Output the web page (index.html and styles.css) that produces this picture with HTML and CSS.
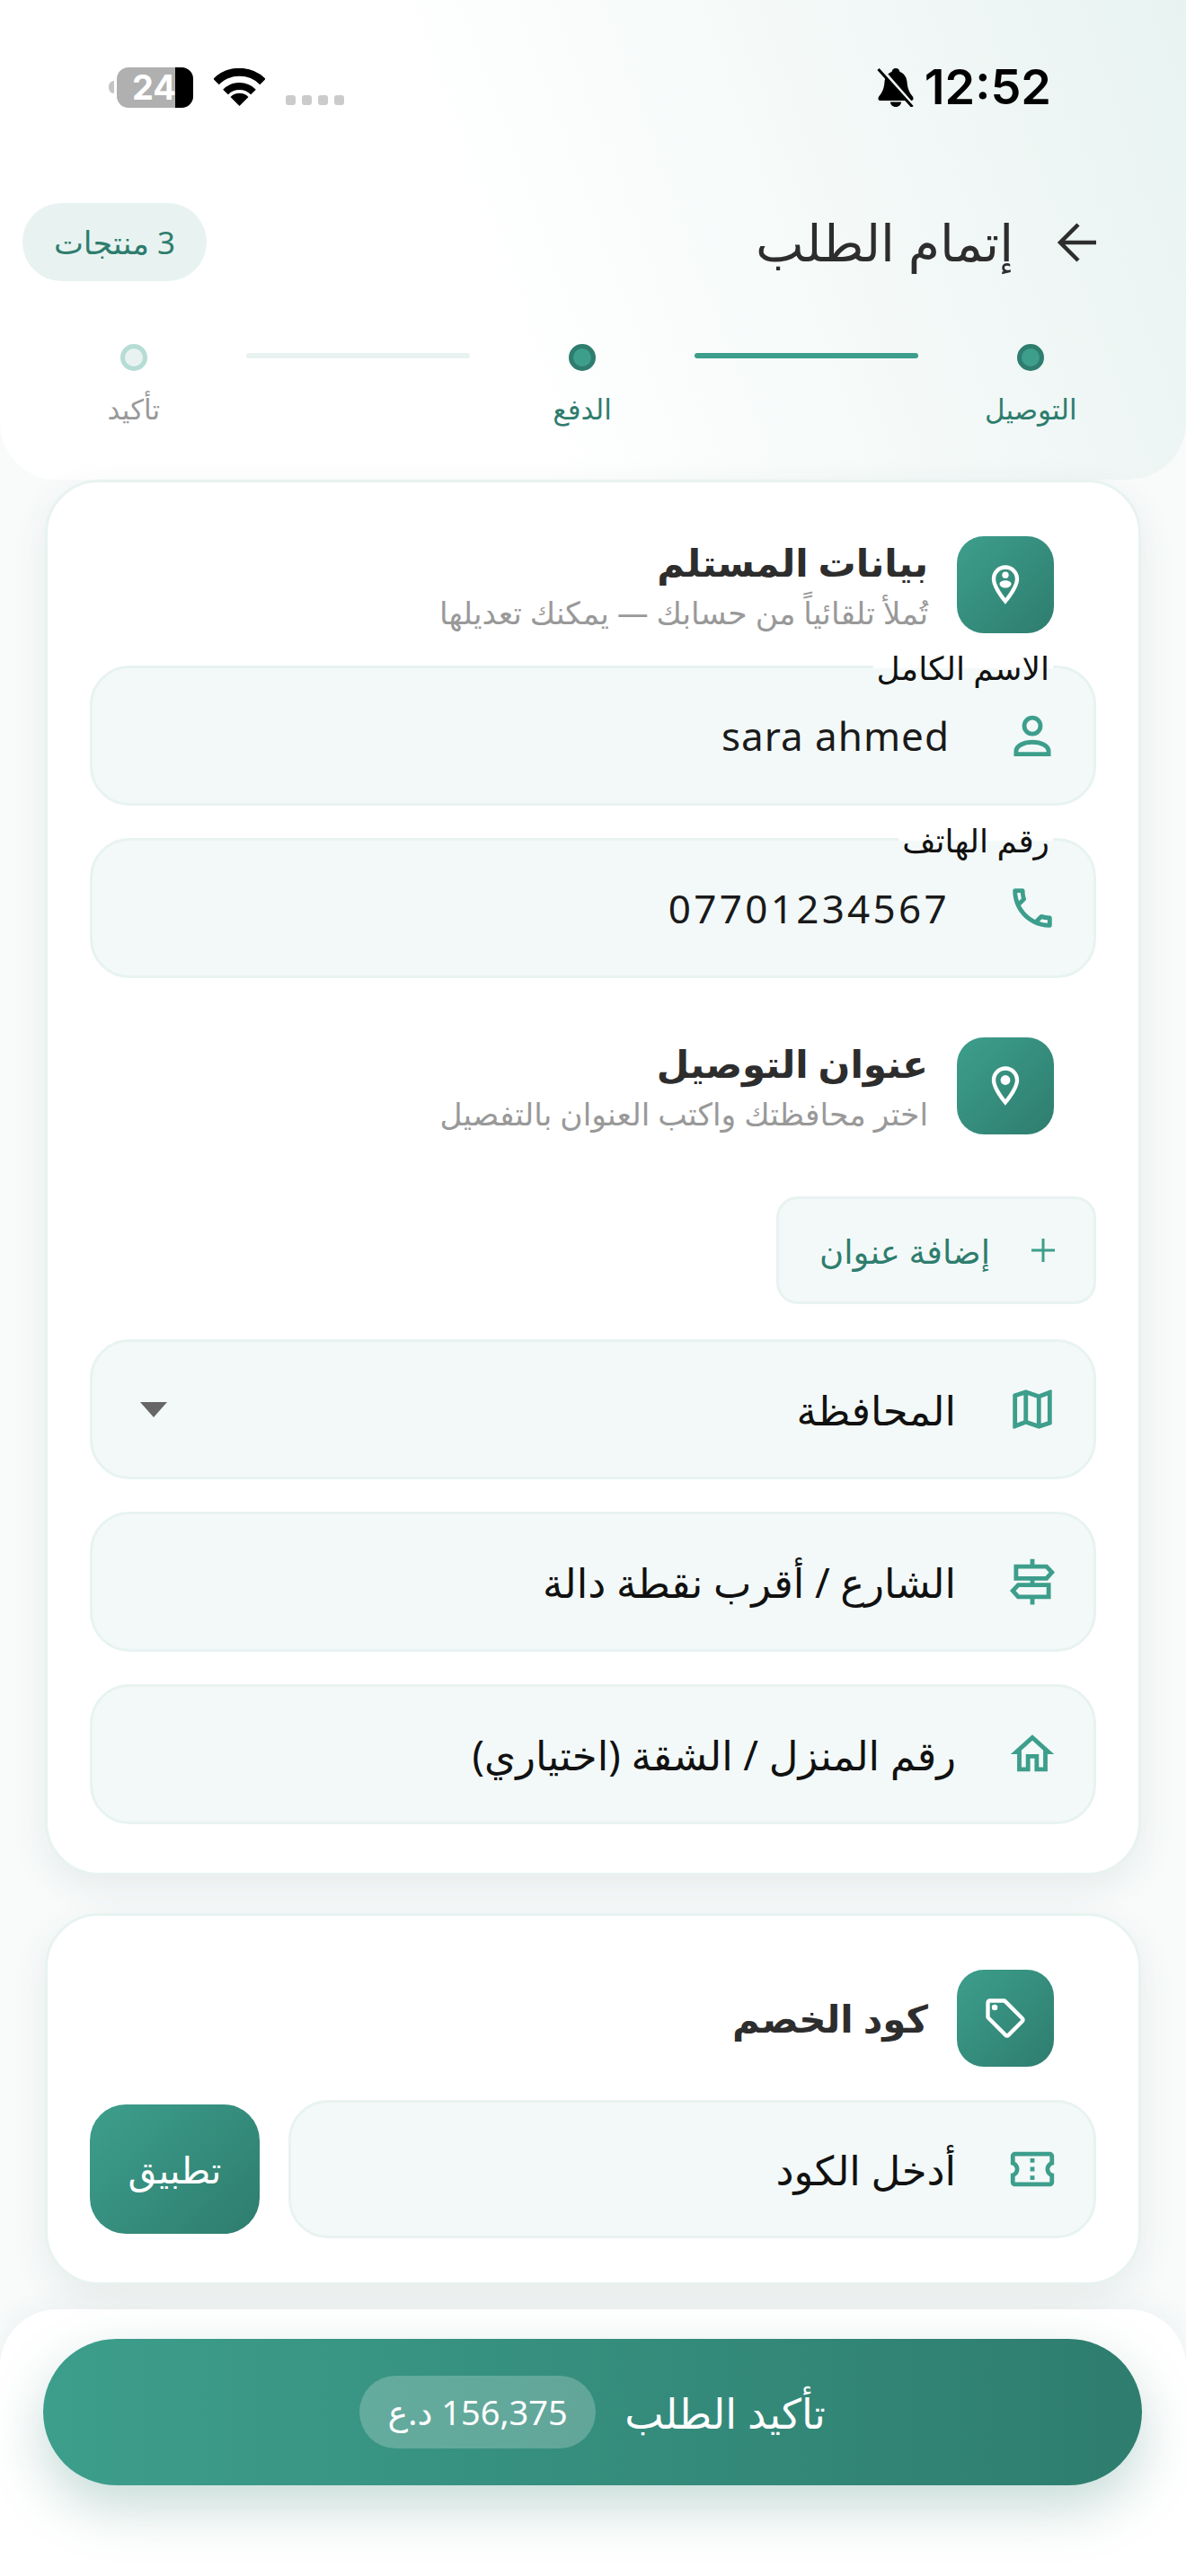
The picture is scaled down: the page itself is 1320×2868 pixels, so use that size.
FILE: index.html
```html
<!DOCTYPE html>
<html lang="ar" dir="rtl">

<head>
    <meta charset="utf-8">
    <title>إتمام الطلب</title>
    <link rel="stylesheet" href="styles.css">
</head>

<body>
    <header class="top">
        <div class="status">
            <div class="status-time">
                <span class="clock">12:52</span>
                <svg class="bell" viewBox="0 0 42 44">
                    <path d="M21 1c3 0 4 2 4.500 4 5 2 7.500 6 8 11 .5 7 2 11 6 16 2 3 1 5-2 5H4.500c-3 0-4-2-2-5 4-5 5.500-9 6-16 .5-5 3-9 8-11C17 3 18 1 21 1zM15 38.500h12c0 3-2.500 5.500-6 5.500s-6-2.500-6-5.500z" />
                    <path class="bell-gap" d="M4 1l36 41" />
                    <path class="bell-slash" d="M1.500 2l38 42" />
                </svg>
            </div>
            <div class="status-sys">
                <div class="dots"><i></i><i></i><i></i><i></i></div>
                <svg class="wifi" viewBox="0 0 57 42">
                    <path d="M2.500 15a37 37 0 0 1 52 0" fill="none" stroke="#000" stroke-width="9" />
                    <path d="M13 26.500a22 22 0 0 1 31 0" fill="none" stroke="#000" stroke-width="8" />
                    <path d="M28.500 42l-10-10a14 14 0 0 1 20 0z" />
                </svg>
                <div class="battery"><span class="battery-num">24</span><i class="battery-end"></i></div>
                <i class="battery-nub"></i>
            </div>
        </div>

        <div class="title-row">
            <div class="title-side">
                <svg class="back" viewBox="0 0 48 48">
                    <path d="M4 24h40M24 4 4 24l20 20" />
                </svg>
                <h1>إتمام الطلب</h1>
            </div>
            <div class="chip">3 منتجات</div>
        </div>

        <div class="steps">
            <div class="step on"><i class="dot"></i><span>التوصيل</span></div>
            <div class="step-line on"></div>
            <div class="step on"><i class="dot"></i><span>الدفع</span></div>
            <div class="step-line"></div>
            <div class="step"><i class="dot"></i><span>تأكيد</span></div>
        </div>
    </header>

    <main class="content">
        <section class="card">
            <div class="head">
                <div class="head-icon">
                    <svg viewBox="0 0 24 24">
                        <path d="M12 2C8.130 2 5 5.130 5 9c0 5.250 7 13 7 13s7-7.750 7-13c0-3.870-3.130-7-7-7zM7 9c0-2.760 2.240-5 5-5s5 2.240 5 5c0 2.880-2.880 7.190-5 9.880C9.920 16.210 7 11.850 7 9z" />
                        <circle cx="12" cy="7" r="1.700" />
                        <path d="M12 9.800c1.700 0 3 .8 3 1.700 0 1.100-1.400 2.100-3 2.100s-3-1-3-2.100c0-.9 1.300-1.700 3-1.700z" />
                    </svg>
                </div>
                <div class="head-text">
                    <h2>بيانات المستلم</h2>
                    <p>تُملأ تلقائياً من حسابك — يمكنك تعديلها</p>
                </div>
            </div>

            <div class="field">
                <label class="float-label">الاسم الكامل</label>
                <svg class="ico ico-line" viewBox="0 0 24 24">
                    <circle cx="12" cy="7.500" r="3.700" />
                    <path d="M4.500 20.500v-1.200c0-2.700 3.600-4.300 7.500-4.300s7.500 1.600 7.500 4.300v1.200z" />
                </svg>
                <span class="value">sara ahmed</span>
            </div>

            <div class="field">
                <label class="float-label">رقم الهاتف</label>
                <svg class="ico" viewBox="0 0 24 24">
                    <path d="M6.540 5c.06.89.21 1.760.45 2.590l-1.200 1.200c-.41-1.200-.67-2.470-.76-3.790h1.510m9.860 12.020c.85.24 1.720.39 2.600.45v1.490c-1.320-.09-2.590-.35-3.800-.75l1.200-1.190M7.500 3H4c-.55 0-1 .45-1 1 0 9.390 7.610 17 17 17 .55 0 1-.45 1-1v-3.490c0-.55-.45-1-1-1-1.240 0-2.450-.2-3.570-.57-.1-.04-.21-.05-.31-.05-.26 0-.51.1-.71.29l-2.200 2.200c-2.830-1.450-5.150-3.760-6.590-6.590l2.200-2.200c.28-.28.36-.67.25-1.020C8.700 6.450 8.500 5.250 8.500 4c0-.55-.45-1-1-1z" />
                </svg>
                <span class="value value-phone">07701234567</span>
            </div>

            <div class="head head-second">
                <div class="head-icon">
                    <svg viewBox="0 0 24 24">
                        <path d="M12 2C8.130 2 5 5.130 5 9c0 5.250 7 13 7 13s7-7.750 7-13c0-3.870-3.130-7-7-7zM7 9c0-2.760 2.240-5 5-5s5 2.240 5 5c0 2.880-2.880 7.190-5 9.880C9.920 16.210 7 11.850 7 9z" />
                        <circle cx="12" cy="9" r="2.500" />
                    </svg>
                </div>
                <div class="head-text">
                    <h2>عنوان التوصيل</h2>
                    <p>اختر محافظتك واكتب العنوان بالتفصيل</p>
                </div>
            </div>

            <div class="add-row">
                <button class="add-btn" type="button">
                    <svg class="plus" viewBox="0 0 28 28"><path d="M14 1v26M1 14h26" /></svg>
                    <span>إضافة عنوان</span>
                </button>
            </div>

            <div class="field field-select">
                <svg class="ico" viewBox="0 0 24 24">
                    <path d="M20.500 3l-.16.03L15 5.100 9 3 3.360 4.900c-.21.07-.36.25-.36.48V20.500c0 .28.22.5.5.5l.16-.03L9 18.900l6 2.100 5.640-1.900c.21-.07.36-.25.36-.48V3.500c0-.28-.22-.5-.5-.5zM10 5.470l4 1.400v11.660l-4-1.400V5.470zm-5 .99l3-1.010v11.700l-3 1.160V6.460zm14 11.080l-3 1.010V6.860l3-1.160v11.840z" />
                </svg>
                <span class="hint">المحافظة</span>
                <i class="caret"></i>
            </div>

            <div class="field field-tight">
                <svg class="ico ico-line" viewBox="0 0 24 24">
                    <path d="M12 1.500v3.500M12 10.500v3M12 19v3.500" />
                    <path d="M4.500 5h14l2.500 2.700-2.500 2.800h-14z" />
                    <path d="M19.500 13.500h-14L3 16.200 5.500 19h14z" />
                </svg>
                <span class="hint">الشارع / أقرب نقطة دالة</span>
            </div>

            <div class="field field-tight">
                <svg class="ico" viewBox="0 0 24 24">
                    <path d="M12 5.690l5 4.500V18h-2v-6H9v6H7v-7.810l5-4.500M12 3L2 12h3v8h6v-6h2v6h6v-8h3L12 3z" />
                </svg>
                <span class="hint">رقم المنزل / الشقة (اختياري)</span>
            </div>
        </section>

        <section class="card card-code">
            <div class="head">
                <div class="head-icon">
                    <svg viewBox="0 0 24 24">
                        <path d="M21.410 11.410l-8.830-8.830C12.210 2.210 11.700 2 11.170 2H4c-1.100 0-2 .9-2 2v7.170c0 .53.21 1.040.59 1.410l8.830 8.830c.78.78 2.050.78 2.830 0l7.170-7.170c.79-.78.79-2.040-.01-2.830zM12.830 20L4 11.170V4h7.170L20 12.830 12.830 20z" />
                        <circle cx="6.500" cy="6.500" r="1.500" />
                    </svg>
                </div>
                <div class="head-text">
                    <h2>كود الخصم</h2>
                </div>
            </div>

            <div class="code-row">
                <div class="field field-code">
                    <svg class="ico" viewBox="0 0 24 24">
                        <path d="M22 10V6c0-1.110-.9-2-2-2H4c-1.100 0-1.990.89-1.990 2v4c1.100 0 1.990.9 1.990 2s-.89 2-2 2v4c0 1.100.9 2 2 2h16c1.100 0 2-.9 2-2v-4c-1.100 0-2-.9-2-2s.9-2 2-2zm-2-1.460c-1.190.69-2 1.990-2 3.460s.81 2.770 2 3.460V18H4v-2.540c1.190-.69 2-1.990 2-3.460 0-1.480-.8-2.770-1.990-3.460L4 6h16v2.540zM11 15h2v2h-2zm0-4h2v2h-2zm0-4h2v2h-2z" />
                    </svg>
                    <span class="hint">أدخل الكود</span>
                </div>
                <button class="apply" type="button">تطبيق</button>
            </div>
        </section>
    </main>

    <footer class="bottom">
        <button class="confirm" type="button">
            <span>تأكيد الطلب</span>
            <span class="price">156,375 د.ع</span>
        </button>
    </footer>
</body>

</html>
```

FILE: styles.css
```css
* {
    box-sizing: border-box;
}

html,
body {
    margin: 0;
    padding: 0;
}

body {
    width: 1320px;
    height: 2868px;
    overflow: hidden;
    display: flex;
    flex-direction: column;
    background-color: #f9fbfb;
    font-family: "Noto Sans", "DejaVu Sans", sans-serif;
    color: #1a1a1a;
}

h1,
h2,
p {
    margin: 0;
    font-weight: 400;
}

button {
    font-family: inherit;
    border: none;
    padding: 0;
}

i {
    display: block;
}

/* top area */
.top {
    height: 534px;
    flex: none;
    padding-top: 74px;
    border-radius: 0 0 64px 64px;
    background: linear-gradient(250deg, #e8f3f1 0%, #f4f9f8 30%, #fff 60%);
}

.status {
    height: 46px;
    padding: 0 150px 0 121px;
    display: flex;
    justify-content: space-between;
    align-items: center;
}

.status-time {
    display: flex;
    align-items: center;
    gap: 11px;
}

.clock {
    font-family: Inter, "Liberation Sans", sans-serif;
    font-size: 54px;
    line-height: 46px;
    font-weight: 600;
    color: #000;
    direction: ltr;
}

.bell {
    width: 42px;
    height: 44px;
}

.bell-gap {
    stroke: #edf5f3;
    stroke-width: 4;
}

.bell-slash {
    stroke: #000;
    stroke-width: 3;
}

.status-sys {
    display: flex;
    align-items: center;
}

.dots {
    display: flex;
    gap: 7px;
    align-self: flex-end;
    margin-bottom: 3px;
    margin-left: 23px;
}

.dots i {
    width: 11px;
    height: 11px;
    border-radius: 3px;
    background-color: #cbcbcb;
}

.wifi {
    width: 57px;
    height: 42px;
    margin-left: 23px;
}

.battery {
    width: 85px;
    height: 45px;
    border-radius: 13px;
    overflow: hidden;
    background-color: #b0b0b0;
    display: flex;
    align-items: center;
    direction: ltr;
    position: relative;
    padding-left: 17px;
}

.battery-num {
    font-family: Inter, "Liberation Sans", sans-serif;
    font-size: 38px;
    font-weight: 700;
    line-height: 45px;
    color: #fff;
}

.battery-end {
    position: absolute;
    right: 0;
    top: 0;
    width: 20px;
    height: 45px;
    background-color: #000;
}

.battery-nub {
    width: 6px;
    height: 14px;
    margin-right: 3px;
    border-radius: 7px 0 0 7px;
    background-color: #c4c4c4;
}

.title-row {
    height: 87px;
    margin-top: 106px;
    padding: 0 96px 0 25px;
    display: flex;
    justify-content: space-between;
    align-items: center;
}

.title-side {
    display: flex;
    align-items: center;
    gap: 48px;
}

.back {
    width: 48px;
    height: 48px;
    fill: none;
    stroke: #2d2d2d;
    stroke-width: 4.500;
}

h1 {
    font-size: 57px;
    line-height: 87px;
    font-weight: 500;
    color: #2d2d2d;
}

.chip {
    width: 205px;
    height: 87px;
    border-radius: 44px;
    background-color: #e8f3f1;
    color: #2e7d6e;
    font-size: 35px;
    line-height: 87px;
    text-align: center;
}

.steps {
    margin-top: 70px;
    padding: 0 48px 0 24px;
    display: flex;
}

.step {
    flex: 1;
    display: flex;
    flex-direction: column;
    align-items: center;
    gap: 22px;
    font-size: 31px;
    line-height: 40px;
    color: #999;
}

.step.on {
    color: #2e7d6e;
}

.dot {
    width: 30px;
    height: 30px;
    border-radius: 50%;
    background-color: #e8f3f1;
    border: 5px solid #b5dcd5;
}

.step.on .dot {
    background-color: #3d9e8c;
    border-color: #2e7d6e;
}

.step-line {
    flex: 1;
    height: 6px;
    margin-top: 10px;
    border-radius: 3px;
    background-color: #e8f3f1;
}

.step-line.on {
    background-color: #3d9e8c;
}

/* cards */
.content {
    padding: 0 50px;
}

.card {
    padding: 60px 47px 54px;
    border: 3px solid #e8f3f1;
    border-radius: 60px;
    background-color: #fff;
    box-shadow: 0 14px 40px rgba(46, 80, 72, 0.09);
}

.card-code {
    margin-top: 42px;
    padding-bottom: 49px;
}

.head {
    height: 108px;
    padding-right: 47px;
    display: flex;
    align-items: center;
    gap: 32px;
}

.head-second {
    margin-top: 66px;
}

.head-icon {
    width: 108px;
    height: 108px;
    flex: none;
    border-radius: 30px;
    background: linear-gradient(135deg, #3d9e8c, #2e7d6e);
    display: flex;
    align-items: center;
    justify-content: center;
}

.head-icon svg {
    width: 52px;
    height: 52px;
    fill: #fff;
}

h2 {
    font-size: 42px;
    line-height: 58px;
    font-weight: 700;
    color: #2d2d2d;
}

.head-text p {
    margin-top: 9px;
    margin-bottom: 5px;
    font-size: 34.500px;
    line-height: 36px;
    color: #999;
}

.field {
    height: 156px;
    margin-top: 36px;
    padding: 0 39px 0 53px;
    border: 3px solid #e8f3f1;
    border-radius: 44px;
    background-color: #f3f9f8;
    display: flex;
    align-items: center;
    gap: 56px;
    position: relative;
}

.field-select {
    margin-top: 39px;
}

.field-code {
    flex: 1;
    margin-top: 0;
    height: 154px;
}

.float-label {
    position: absolute;
    top: -19px;
    right: 45px;
    padding: 0 4px;
    font-size: 36px;
    line-height: 38px;
    color: #111;
    background: linear-gradient(#fff 50%, #f3f9f8 50%);
}

.ico {
    width: 58px;
    height: 58px;
    flex: none;
    fill: #3d9e8c;
}

.ico-line {
    fill: none;
    stroke: #3d9e8c;
    stroke-width: 2;
}

.value {
    margin-right: 7px;
    font-size: 44px;
    letter-spacing: 1px;
    color: #1a1a1a;
}

.value-phone {
    letter-spacing: 3.300px;
}

.hint {
    font-size: 45px;
    color: #111;
}

.caret {
    margin-right: auto;
    width: 0;
    height: 0;
    border-left: 15px solid transparent;
    border-right: 15px solid transparent;
    border-top: 17px solid #666;
}

.add-row {
    margin-top: 69px;
    display: flex;
}

.add-btn {
    width: 356px;
    height: 120px;
    padding-right: 42px;
    border: 3px solid #e8f3f1;
    border-radius: 24px;
    background-color: #f3f9f8;
    color: #2e7d6e;
    font-size: 37px;
    display: flex;
    align-items: center;
    gap: 45px;
}

.plus {
    width: 28px;
    height: 28px;
    fill: none;
    stroke: #3d9e8c;
    stroke-width: 3;
}

.code-row {
    margin-top: 37px;
    display: flex;
    align-items: center;
    gap: 32px;
}

.apply {
    width: 189px;
    height: 144px;
    flex: none;
    border-radius: 40px;
    background: linear-gradient(135deg, #3d9e8c, #2e7d6e);
    color: #fff;
    font-size: 41px;
}

/* bottom bar */
.bottom {
    flex: 1;
    margin-top: 27px;
    padding: 33px 49px 0 48px;
    border-radius: 64px 64px 0 0;
    background-color: #fff;
    box-shadow: 0 -8px 30px rgba(46, 80, 72, 0.05);
}

.confirm {
    width: 100%;
    height: 163px;
    border-radius: 82px;
    background: linear-gradient(90deg, #3d9e8c, #2e7d6e);
    box-shadow: 0 24px 60px rgba(46, 125, 110, 0.28);
    color: #fff;
    font-size: 46px;
    display: flex;
    align-items: center;
    justify-content: center;
    gap: 32px;
}

.price {
    width: 263px;
    height: 81px;
    border-radius: 41px;
    background-color: rgba(255, 255, 255, 0.22);
    font-size: 38px;
    line-height: 81px;
    text-align: center;
}
```
